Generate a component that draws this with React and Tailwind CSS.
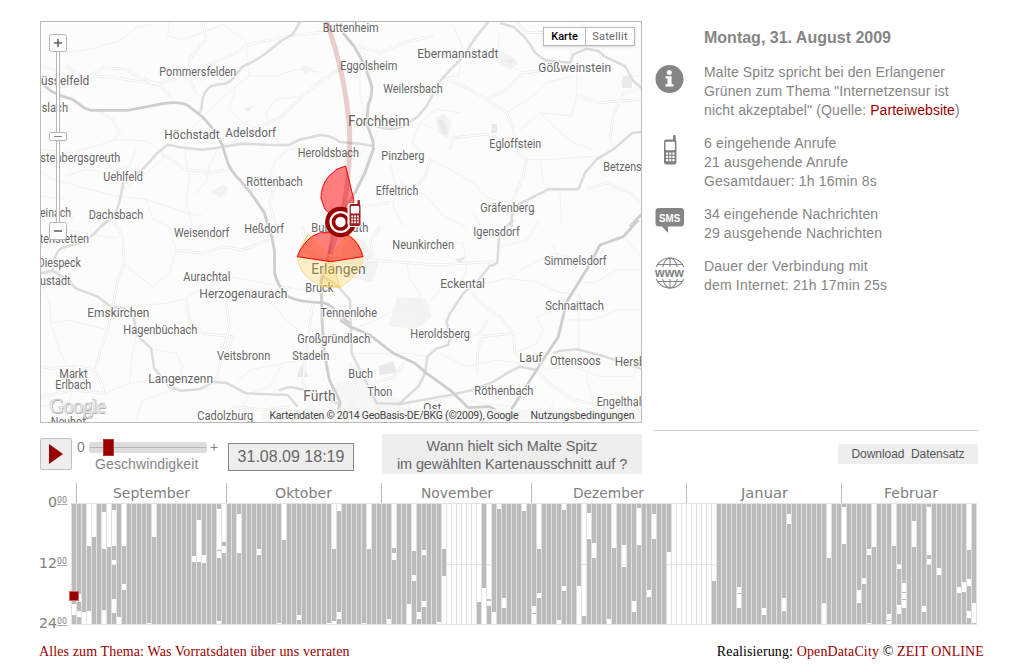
import React from "react";

const EMPTY = [[0, 120]];

// Hours without connection data, by day index; 5 units per hour.
const GAPS = {
  0: [[100, 111]], 1: [[90, 98], [107, 113]], 2: [[108, 120]], 3: [[0, 42], [107, 120]], 4: [[0, 33]],
  6: [[8, 45], [106, 120]], 7: [[0, 43]], 8: [[6, 42], [56, 61], [95, 109]], 9: [[113, 120]], 10: [[0, 42], [80, 86]],
  15: [[119, 120]], 16: [[0, 33]], 24: [[52, 58]], 25: [[16, 58]], 26: [[51, 59]],
  29: [[5, 46], [47, 54], [117, 120]], 30: [[0, 38], [42, 49]], 33: [[10, 49]], 37: [[45, 51]],
  41: [[119, 120]], 42: [[0, 36]], 45: [[111, 116]], 51: [[119, 120]], 52: [[0, 45], [117, 120]], 53: [[0, 7], [108, 115]],
  58: [[119, 120]], 59: [[0, 45]], 63: [[115, 120]], 64: [[0, 44], [49, 56]], 67: [[100, 120]], 68: [[0, 47], [71, 77]],
  69: [[108, 115]], 70: [[46, 51], [97, 103]], 73: [[118, 120]], 74: [[0, 45], [72, 120]],
  75: EMPTY, 76: EMPTY, 77: EMPTY, 78: EMPTY, 79: EMPTY, 80: EMPTY, 81: [[0, 98]], 82: [[84, 120]],
  83: [[0, 95], [97, 102]], 84: [[108, 120]], 85: [[0, 5]], 86: [[94, 104]], 90: [[0, 7]],
  92: [[102, 109], [110, 120]], 93: [[0, 45], [89, 94]], 97: [[116, 120]], 98: [[0, 6], [82, 87]], 101: [[82, 120]],
  102: [[0, 112]], 103: [[9, 35]], 104: [[39, 54]], 107: [[115, 120]], 108: [[0, 44]], 110: [[41, 63]],
  112: [[97, 108]], 113: [[4, 41]], 115: [[86, 93]], 116: [[10, 35]], 119: [[48, 120]],
  120: EMPTY, 121: EMPTY, 122: EMPTY, 123: EMPTY, 124: EMPTY, 125: EMPTY, 126: EMPTY, 127: EMPTY, 128: [[0, 77]],
  133: [[83, 89], [90, 104]], 138: [[104, 111]], 142: [[94, 107]], 143: [[10, 20]], 150: [[99, 120]], 151: [[0, 54]],
  154: [[3, 40]], 157: [[86, 99]], 158: [[74, 80]], 159: [[45, 51], [119, 120]], 160: [[0, 43]],
  163: [[110, 116], [117, 120]], 164: [[0, 42]], 165: [[60, 65], [101, 110]], 166: [[79, 88], [89, 95], [96, 104]],
  168: [[17, 43]], 170: [[102, 108]], 171: [[3, 51], [55, 61]], 173: [[64, 71]], 177: [[83, 89]], 178: [[78, 88]],
  179: [[0, 46], [75, 82], [107, 114]], 180: [[99, 119]],
};

const DAYS = Array.from({ length: 181 }, (_, day) => {
  const bars = [];
  let from = 0;
  for (const [a, b] of GAPS[day] || []) {
    if (a > from) bars.push([from, a]);
    from = b;
  }
  if (from < 120) bars.push([from, 120]);
  return bars;
});

// The map is split in four tiles; tile units are a third of a pixel.
const TILES = [
  { x: -5, y: -6 },
  { x: 299, y: -6 },
  { x: -5, y: 198 },
  { x: 299, y: 198 },
];

const LOCAL = [
  [
    "M15 150L70 165L90 190L200 180L370 205L440 180L600 110L640 85L760 60L930 40",
    "M400 18L395 60L440 70L500 50L560 25L630 75L640 180L600 210L545 260L470 335L450 380L448 420L460 480L450 560L470 630",
    "M100 110L180 95L250 75L300 35L350 25", "M90 150L150 190L200 155L270 160L310 185L370 205L410 250",
    "M15 400L110 410L180 390L240 370L330 375L380 410L380 430L320 480L260 520", "M15 470L50 490L90 500L160 520L240 540L330 550L450 590L500 600",
    "M930 150L860 190L800 240L740 300L650 340L600 380L560 390", "M600 210L580 280L620 320L700 350L740 390", "M690 510L720 430L760 400L880 390",
    "M180 280L230 310L250 350L230 375", "M550 390L520 450L510 500L470 540", "M640 180L720 180L780 160L860 170", "M380 415L450 460L520 470L590 460",
    "M300 400L280 450L215 470L150 460L90 480", "M700 340L690 290L720 250L800 240", "M720 500L700 560L720 630", "M15 540L80 550L110 600L100 632", "M330 550L350 610L400 632", "M500 18L510 70L460 130L465 200L485 240",
  ],
  [
    "M310 185L370 210L440 250L500 290L520 340L530 410L560 430L550 480L515 560", "M340 30L370 100L355 180L310 185L290 200",
    "M240 320L215 380L270 430L330 460L400 500L440 545L510 560", "M330 400L340 365L440 355L500 370L530 410", "M560 430L640 430L700 425L780 420L830 395",
    "M710 160L710 240L695 300L600 290L530 350", "M905 220L850 230L820 300L810 370L825 400", "M700 18L700 60L690 100L700 130L710 160",
    "M150 440L165 500L160 570L190 632", "M270 430L255 480L220 520L165 510", "M15 70L60 90L60 240L75 300", "M5 440L60 420L75 390", "M440 250L500 220L550 170L600 165",
    "M600 290L650 340L700 380L760 400", "M480 50L470 120L530 160L590 180", "M710 240L780 260L905 250", "M600 430L610 500L660 530L665 630",
    "M110 345L100 390L60 480L30 500", "M280 60L190 80L120 110L60 90", "M180 500L260 540L310 600L380 632", "M400 590L420 632", "M740 520L800 500L870 530L905 560",
    "M330 365L240 320L290 280L360 290", "M830 240L850 180L905 180", "M10 560L80 570L150 560", "M500 290L580 240L620 200L700 180", "M720 18L760 60L790 100", "M530 18L560 50L640 50L700 60",
  ],
  [
    "M230 0L260 50L265 130L245 180L230 260L215 330L190 400L180 450L200 500L205 520L110 510L15 530", "M265 260L390 250L450 235L520 190L580 170L690 190L800 210L850 225",
    "M15 180L40 250L45 310L75 400L95 440", "M180 450L120 440L50 445L15 440", "M205 520L280 490L340 480", "M340 385L420 400L440 440L430 480",
    "M570 240L580 320L560 400L540 480", "M700 240L750 300L800 340L850 370", "M600 490L640 450L740 430L850 410", "M450 235L460 300L500 340L590 350L570 400",
    "M15 560L80 545L150 580L200 605", "M400 18L420 90L400 160L350 200L260 130", "M700 60L620 90L560 80L500 100L420 90", "M215 330L100 300L45 310", "M280 490L290 400L300 350",
    "M830 250L810 400L800 490L830 560", "M740 430L700 500L640 520L600 600", "M50 20L150 40L240 55", "M800 20L810 90L860 120L930 140", "M110 510L95 560L130 605", "M300 600L320 540L410 510",
    "M560 590L600 560L680 570L760 560",
  ],
  [
    "M85 120L200 128L290 135L365 130L460 125", "M200 128L210 180L240 220L230 280L255 260L300 210", "M440 190L500 175L590 185L650 215L720 225L715 390",
    "M385 200L420 250L480 290L520 340L525 400L560 430", "M500 180L560 140L640 100L740 120", "M525 400L590 370L610 330L590 290L650 270",
    "M410 460L415 380L430 350L520 340", "M690 180L760 190L830 150L905 150", "M660 300L760 300L830 270L905 270", "M590 450L640 500L700 540L760 550L860 550",
    "M600 450L700 440L780 470L880 470L905 380", "M35 400L110 400L200 400L260 410", "M200 420L160 470L100 490", "M30 330L110 300L180 260L230 255", "M640 70L660 140L720 160",
    "M120 20L90 60L100 110L60 140", "M230 60L370 70L380 150L360 190", "M480 80L560 60L600 0", "M330 360L420 340L440 300", "M250 550L340 530L420 550L530 560", "M760 400L740 470L760 550",
    "M30 560L60 480L30 430", "M640 550L620 590", "M860 60L905 110", "M100 590L200 570L260 590", "M300 400L380 440L470 420L540 430",
  ],
];

const LANES = LOCAL.map((paths) => paths.filter((_, i) => i % 3 === 0));

const ROADS = [
  [
    "M795 14L770 55L735 75L690 112L660 132L620 152L600 175Q585 200 565 203Q520 205 510 225Q498 240 497 275L490 290",
    "M195 632L235 600L250 560L262 500L320 460L365 410L395 386L440 395L500 401L560 393L615 383L700 387L760 387L785 373L850 358Q880 355 912 378L972 383L1012 390",
  ],
  [
    "M448 14L410 60L370 120L300 195L260 270L235 300L210 318Q170 350 110 332", "M480 22L520 32L550 60L570 85L585 110L615 132L690 140L700 115L740 98L775 105L800 125L855 150L880 195L908 218",
    "M908 348L878 350L820 400L770 430L735 470L715 520L625 520L535 565L515 600L515 632",
  ],
  [
    "M215 0L170 45L130 70L80 83Q62 90 55 120L50 152M12 160L50 152L95 180L120 205L185 230L225 260L265 265L292 290L303 345L345 385L355 445L400 500L435 512L490 508L535 485L575 490L630 520L755 525L785 560",
    "M730 512Q755 498 775 503L830 515L870 535L905 550",
  ],
  [
    "M520 0L478 40L472 128Q465 135 450 137L420 175L370 220L330 280L320 305L330 350L325 375L290 385L262 410L255 460L235 500L190 540L175 555",
    "M640 400L660 392L710 388L790 408L908 448", "M590 450L540 440L510 455L460 485L400 510L330 525L180 552L110 550L85 500L35 400L30 240L-10 195L-50 170",
  ],
];

const MOTORWAYS = [
  ["M12 198L45 225L70 238L110 250L145 276L165 283L275 283L385 262Q430 256 455 268L500 303L540 350L558 385L575 440Q585 465 605 485L640 525L685 590L697 632"],
  ["M5 45L45 95L75 150L95 210Q97 240 85 265L80 320L100 380L100 400L75 470L40 540L-20 632", "M908 590L870 632"],
  ["M697 20L707 50L715 90L716 160Q725 195 750 225Q775 245 855 248Q880 250 895 270L942 312", "M892 20L877 110L855 180L858 300L865 400L880 480L912 545L908 570"],
  ["M0 300L30 320L90 345L160 400L225 430L260 460L330 510L385 563L450 560L490 585", "M895 0L850 50L780 75L745 140L680 245L655 350L615 410L510 575"],
];

const LABELS = [
  [["Pommersfelden", 370, 180, 231, 12], ["üsselfeld", 15, 207, 145, 13], ["slach", 17, 288, 79, 12], ["Höchstadt", 385, 369, 166, 13], ["Adelsdorf", 568, 364, 152, 13],
    ["stenbergsgreuth", 13, 437, 240, 12], ["Uehlfeld", 202, 494, 119, 12], ["Röttenbach", 631, 509, 169, 12], ["einach", 12, 602, 93, 12], ["Dachsbach", 158, 608, 164, 12],
    ["Heroldsbach", 785, 422, 184, 12], ["Buttenheim", 860, 47, 168, 12]],
  [["Eggolsheim", 1, 162, 171, 12], ["Ebermannstadt", 232, 126, 243, 13], ["Weilersbach", 130, 231, 178, 12], ["Forchheim", 25, 331, 184, 14], ["Gößweinstein", 595, 168, 218, 12.5],
    ["Egloffstein", 448, 395, 156, 12], ["Pinzberg", 124, 432, 129, 12], ["Effeltrich", 107, 536, 128, 12], ["Gräfenberg", 421, 587, 162, 12], ["Betzens", 790, 464, 115, 12]],
  [["Weisendorf", 414, 50, 166, 12], ["Heßdorf", 625, 38, 119, 12], ["tenstetten", 11, 68, 148, 12], ["Diespeck", 5, 142, 130, 12], ["ustadt", 12, 195, 92, 13], ["Aurachtal", 442, 182, 141, 12],
    ["Herzogenaurach", 490, 234, 264, 13], ["Bruck", 808, 215, 84, 12], ["Emskirchen", 154, 290, 186, 13], ["Hagenbüchach", 262, 341, 222, 12], ["Veitsbronn", 543, 421, 160, 12],
    ["Stadeln", 769, 419, 111, 12], ["Markt", 70, 474, 85, 12], ["Erlbach", 58, 508, 108, 12], ["Langenzenn", 337, 489, 194, 13], ["Fürth", 802, 542, 97, 15], ["Cadolzburg", 484, 599, 168, 12],
    ["Neuhof", 44, 617, 106, 12], ["Erlangen", 826, 163, 163, 14.5], ["Bubenreuth", 826, 35, 171, 12], ["Tennenlohe", 853, 290, 170, 12], ["Großgründlach", 784, 370, 219, 12]],
  [["Igensdorf", 400, 48, 139, 12], ["Neunkirchen", 157, 86, 185, 12], ["Simmelsdorf", 613, 134, 187, 12], ["Eckental", 301, 204, 134, 13], ["Schnaittach", 616, 269, 176, 12],
    ["Heroldsberg", 211, 353, 179, 12], ["Lauf", 538, 426, 69, 13], ["Ottensoos", 630, 434, 152, 12], ["Hersb", 824, 437, 93, 13], ["Buch", 25, 473, 74, 12], ["Thon", 82, 527, 75, 12],
    ["Röthenbach", 403, 524, 177, 12], ["Engelthal", 770, 557, 134, 12], ["Ost", 250, 577, 54, 12]],
];

function Roads({ data, ...stroke }) {
  return data.map((paths, i) => (
    <g key={i} transform={`translate(${TILES[i].x} ${TILES[i].y}) scale(0.33333)`} fill="none" strokeLinejoin="round" {...stroke}>
      {paths.map((d) => <path key={d} d={d} />)}
    </g>
  ));
}

function Handset({ x = 0, y = 0, color, halo }) {
  return (
    <g transform={`translate(${x} ${y})`}>
      {halo && <path d="M1 4H7V0H11V24Q11 26 9 26H1Q-1 26 -1 24V6Q-1 4 1 4Z" fill="white" stroke="white" strokeWidth="2" />}
      <rect x="8" y="0" width="2.4" height="6" rx="0.8" fill={color} />
      <rect x="0" y="4" width="11" height="22" rx="1.8" fill={color} />
      <rect x="1.3" y="6" width="8.4" height="7.6" rx="1" fill="white" />
      {[0, 1, 2].map((r) => [0, 1, 2].map((c) => <rect key={`${r}${c}`} x={1.8 + c * 2.8} y={15.5 + r * 2.9} width="1.9" height="1.9" fill="white" />))}
    </g>
  );
}

function MapCanvas() {
  return (
    <svg width="600" height="400" viewBox="0 0 600 400" className="block">
      <rect width="600" height="400" fill="#fcfcfc" />
      <g fill="#f3f3f3">
        <path d="M258 46l5-3 9 4-7 5zM454 29l15 4 9 8-9 7-13-8zM394 95l10-3 6 8-3 16-9-5zM451 102h5v9h-6zM356 275l30 2 4 18-15 12-27-3zM303 215l20 3 14 24-6 18-20-4-12-22zM170 170l13-8 5 5-8 9z" />
        <path d="M286 372l12-12 30 2 40 20 10 18h-90z" opacity=".7" />
      </g>
      <g fill="#e9e9e9">
        <path d="M581 54h10v12h-10zM451 102h5v9h-6zM338 344l14-5 4 12-18 2zM260 343l8 12h-12zM414 237l12-3-7 8zM464 39l10-2-4 5zM203 87l9-3-5 5zM396 97l8 2 3 12-5 2z" />
      </g>
      <Roads data={LOCAL} stroke="#f0f0f0" strokeWidth="2.6" />
      <Roads data={LANES} stroke="#e9e9e9" strokeWidth="8" />
      <Roads data={LANES} stroke="#fefefe" strokeWidth="4" />
      <Roads data={ROADS} stroke="#dcdcdc" strokeWidth="7.5" />
      <Roads data={MOTORWAYS} stroke="#d0cecc" strokeWidth="8.5" />
      <g fontFamily="Roboto, sans-serif" fill="#666" stroke="#fff" strokeOpacity=".85" strokeWidth="2.4" paintOrder="stroke" strokeLinejoin="round">
        {LABELS.map((list, i) => list.map(([t, x, y, w, s]) => (
          <text key={t} x={TILES[i].x + x / 3} y={TILES[i].y + y / 3} textLength={w / 3} lengthAdjust="spacingAndGlyphs" fontSize={s}>{t}</text>
        )))}
      </g>
      <g transform="translate(249 138) scale(0.33333)" strokeLinejoin="round">
        <path d="M55 222L32 262L22 292Q28 335 62 360L92 378L150 382Q195 358 216 312L219 288L205 250L175 222L122 290Z" fill="#fc3" fillOpacity=".26" stroke="#fc6" strokeOpacity=".7" strokeWidth="3" />
        <path d="M122 290L92 378L150 382Z" fill="#fc3" fillOpacity=".2" stroke="#fb4" strokeOpacity=".5" strokeWidth="3" />
        <path d="M122 305L22 290Q35 252 68 228L92 218H150L178 228Q208 248 219 290Z" fill="#f00" fillOpacity=".5" stroke="#f00" strokeWidth="3" />
        <path d="M66 232L122 290L176 232" fill="none" stroke="#f93" strokeOpacity=".6" strokeWidth="3" />
        <path d="M167 18L192 122L180 160L150 190L105 148L93 115Q92 80 115 50L140 28Z" fill="#f00" fillOpacity=".5" stroke="#f00" strokeWidth="3" />
      </g>
      <path d="M285 -2Q304 50 308.500 106Q310 160 299 200L289 232" fill="none" stroke="#900" strokeOpacity=".19" strokeWidth="5" />
      <circle cx="299.500" cy="200" r="13" fill="white" fillOpacity=".9" />
      <circle cx="299.500" cy="200" r="13.200" fill="none" stroke="#900" strokeWidth="4.200" />
      <circle cx="299.500" cy="200" r="7" fill="white" stroke="#900" strokeWidth="3.600" />
      <Handset x={308.500} y={178} color="#a02020" halo />
      <g fontFamily="Liberation Serif, serif" fontSize="21">
        <text x="8.700" y="391.800" textLength="57" fill="#aaa">Google</text>
        <text x="8" y="391" textLength="57" fill="#f5f5f5" stroke="#c4c4c4" strokeWidth=".5">Google</text>
      </g>
      <rect x="221" y="387" width="379" height="13" fill="#f5f5f5" fillOpacity=".75" />
      <g fontFamily="Roboto, sans-serif" fontSize="10.500" fill="#444">
        <text x="228.500" y="397" textLength="249">Kartendaten © 2014 GeoBasis-DE/BKG (©2009), Google</text>
        <text x="489.500" y="397" textLength="104">Nutzungsbedingungen</text>
      </g>
      <g>
        <rect x="15.500" y="28" width="3" height="175" fill="white" stroke="#b5b5b5" />
        <rect x="8.500" y="12.500" width="17" height="17" rx="2" fill="#fdfdfd" stroke="#b5b5b5" />
        <path d="M13 21H21M17 17V25" stroke="#666" strokeWidth="1.600" />
        <rect x="8.500" y="110.500" width="17" height="8" rx="1.500" fill="#fdfdfd" stroke="#b5b5b5" />
        <path d="M13 114.500H21" stroke="#888" />
        <rect x="8.500" y="200.500" width="17" height="17" rx="2" fill="#fdfdfd" stroke="#b5b5b5" />
        <path d="M13 209H21" stroke="#666" strokeWidth="1.600" />
      </g>
    </svg>
  );
}

function MapPanel() {
  return (
    <div className="relative h-[402px] w-[602px] shrink-0 overflow-hidden border border-[#bbb]">
      <MapCanvas />
      <div className="absolute top-[5px] right-[6px] flex h-[19px] w-[92px] border border-[#b9b9b9] bg-white font-[Roboto,sans-serif] text-[11px] leading-[18px] shadow-sm">
        <div className="w-[42px] border-r border-[#b9b9b9] text-center font-medium text-black">Karte</div>
        <div className="flex-1 text-center tracking-[0.25px] text-[#666]">Satellit</div>
      </div>
    </div>
  );
}

function InfoIcon() {
  return (
    <svg width="30" height="30" viewBox="0 0 30 30">
      <circle cx="15.500" cy="15" r="14" fill="#858585" />
      <circle cx="15.300" cy="8.500" r="2.500" fill="white" />
      <path d="M11.500 12.300H17.600V20.300H19.600V22.500H11.500V20.300H13.500V14.500H11.500Z" fill="white" />
    </svg>
  );
}

function PhoneIcon() {
  return (
    <svg width="30" height="34" viewBox="0 0 30 34">
      <g transform="translate(10 1) scale(1.13)"><Handset color="#808080" /></g>
    </svg>
  );
}

function SmsIcon() {
  return (
    <svg width="32" height="28" viewBox="0 0 32 28">
      <path d="M5 1H27Q30 1 30 4V16Q30 19.500 27 19.500H14V26L8 19.500H5Q1.500 19.500 1.500 16V4Q1.500 1 5 1Z" fill="#858585" />
      <text x="5" y="14.500" fontFamily="Liberation Sans, sans-serif" fontWeight="bold" fontSize="11" textLength="21.500" lengthAdjust="spacingAndGlyphs" fill="white">SMS</text>
    </svg>
  );
}

function WwwIcon() {
  return (
    <svg width="32" height="34" viewBox="0 0 32 34">
      <g fill="none" stroke="#858585" strokeWidth="1.100">
        <circle cx="16" cy="16" r="15" />
        <ellipse cx="16" cy="16" rx="8" ry="15" />
        <path d="M16 1V31M4 7.500H28M4 24.500H28" />
      </g>
      <rect x="0" y="10" width="32" height="12" fill="white" />
      <text x="1" y="19.600" fontFamily="Liberation Sans, sans-serif" fontWeight="bold" fontSize="13" textLength="29" lengthAdjust="spacingAndGlyphs" fill="#808080">www</text>
    </svg>
  );
}

function Fact({ icon, iconClass, children }) {
  return (
    <div className="flex">
      <div className={`w-[50px] shrink-0 ${iconClass}`}>{icon}</div>
      <div className="whitespace-nowrap">{children}</div>
    </div>
  );
}

function Sidebar() {
  return (
    <aside className="ml-3 h-[410px] w-[324px] border-b border-[#ccc] pt-[7px] text-[14px] leading-[19px] tracking-[0.12px] text-[#858585]">
      <h1 className="mb-[15px] ml-[50px] text-[16px] leading-5 font-bold tracking-[0px]">Montag, 31. August 2009</h1>
      <div className="flex flex-col gap-[14px]">
        <Fact icon={<InfoIcon />} iconClass="pt-[1px]">
          Malte Spitz spricht bei den Erlangener<br />
          Grünen zum Thema "Internetzensur ist<br />
          nicht akzeptabel" (Quelle: <a className="tracking-[0.05px] text-[#900]">Parteiwebsite</a>)
        </Fact>
        <Fact icon={<PhoneIcon />} iconClass="h-[57px]">
          <div className="tracking-[0.17px]">6 eingehende Anrufe<br />21 ausgehende Anrufe<br />Gesamtdauer: 1h 16min 8s</div>
        </Fact>
        <Fact icon={<SmsIcon />} iconClass="h-[38px] pt-[2px]">
          34 eingehende Nachrichten<br />29 ausgehende Nachrichten
        </Fact>
        <Fact icon={<WwwIcon />} iconClass="">
          <div className="tracking-[0.18px]">Dauer der Verbindung mit<br />dem Internet: 21h 17min 25s</div>
        </Fact>
      </div>
    </aside>
  );
}

function Controls() {
  return (
    <div className="flex h-[52px] items-start pt-[3px] pl-10">
      <button className="mt-1 flex h-8 w-8 items-center justify-center rounded-[2px] border border-[#c2c2c2] bg-[#eee]">
        <svg width="14" height="20" viewBox="0 0 14 20"><path d="M0 0L14 10L0 20Z" fill="#900" /></svg>
      </button>
      <div className="ml-[5px] w-[146px] text-[#858585]">
        <div className="flex h-[22px] items-center pt-[5px] text-[14px]">
          <span className="w-3">0</span>
          <div className="relative flex h-[11px] w-[118px] items-center rounded-[3px] bg-[#ddd] px-[1px]">
            <div className="h-px w-full bg-[#b5b5b5]" />
            <div className="absolute -top-[3px] left-[14px] h-[17px] w-[11px] border border-[#a33] bg-[#900]" />
          </div>
          <span className="ml-[3px]">+</span>
        </div>
        <div className="ml-[18px] text-[14px] leading-4 tracking-[0.1px]">Geschwindigkeit</div>
      </div>
      <div className="mt-[9px] ml-[5px] flex h-7 w-[126px] items-center justify-center border border-[#858585] bg-[#eee] text-[16px] text-[#666]">31.08.09 18:19</div>
      <button className="ml-7 h-10 w-[260px] rounded-[2px] bg-[#eee] pt-[2px] text-[14.5px] leading-[18px] tracking-[-0.1px] text-[#666]">
        Wann hielt sich Malte Spitz<br />im gewählten Kartenausschnitt auf ?
      </button>
      <button className="mt-[10px] ml-[196px] h-5 w-[140px] rounded-[2px] bg-[#eee] text-[12px] leading-5 tracking-[-0.05px] whitespace-pre text-[#555]">Download  Datensatz</button>
    </div>
  );
}

const TICKS = [76, 226, 381, 531, 686, 841];
const MONTHS = [["September", 113, 77], ["Oktober", 275, 57], ["November", 421, 72], ["Dezember", 573, 71], ["Januar", 741, 47], ["Februar", 884, 54]];

function Timeline() {
  return (
    <svg width="1018" height="153" viewBox="0 483 1018 153" className="block" fontFamily="DejaVu Sans, Verdana, sans-serif" fill="#808080">
      {TICKS.map((x) => <rect key={x} x={x} y="483" width="1" height="21" fill="#bbb" />)}
      {MONTHS.map(([m, x, w]) => <text key={m} x={x} y="498" fontSize="13.500" textLength={w} lengthAdjust="spacingAndGlyphs">{m}</text>)}
      {[["0", 507, 48], ["12", 568, 39], ["24", 628, 39]].map(([h, y, x]) => (
        <g key={h}>
          <text x={x} y={y} fontSize="14" textLength={57 - x} lengthAdjust="spacingAndGlyphs">{h}</text>
          <text x="57" y={y - 4} fontSize="9" textLength="10" lengthAdjust="spacingAndGlyphs">00</text>
          <rect x="57" y={y - 3} width="10.500" height="1" fill="#aaa" />
        </g>
      ))}
      <g shapeRendering="crispEdges">
        <g fill="#e2e2e2">
          <rect x="71" y="503" width="906" height="1" />
          <rect x="71" y="564" width="906" height="1" />
          <rect x="71" y="624" width="906" height="1" />
          {Array.from({ length: 182 }, (_, i) => <rect key={i} x={71 + i * 5} y="503" width="1" height="122" />)}
        </g>
        <g fill="#bbb">
          {DAYS.map((bars, i) => bars.map(([a, b]) => <rect key={`${i}-${a}`} x={72 + i * 5} y={504 + a} width="4" height={b - a} />))}
        </g>
        <rect x="69" y="591" width="10" height="10" fill="#c66" />
        <rect x="70" y="592" width="8" height="8" fill="#900" />
      </g>
    </svg>
  );
}

export default function App() {
  return (
    <div className="h-[671px] w-[1018px] overflow-hidden bg-white font-['Liberation_Sans',Arial,sans-serif]">
      <div className="flex pt-[21px] pl-10">
        <MapPanel />
        <Sidebar />
      </div>
      <Controls />
      <Timeline />
      <footer className="flex justify-between pt-2 pr-[34px] pl-[39px] font-['Liberation_Serif',serif] text-[14px] leading-4 tracking-[0.12px] text-black">
        <a className="text-[#900]">Alles zum Thema: Was Vorratsdaten über uns verraten</a>
        <div>Realisierung: <a className="text-[#900]">OpenDataCity</a> © <a className="text-[#900]">ZEIT ONLINE</a></div>
      </footer>
    </div>
  );
}
